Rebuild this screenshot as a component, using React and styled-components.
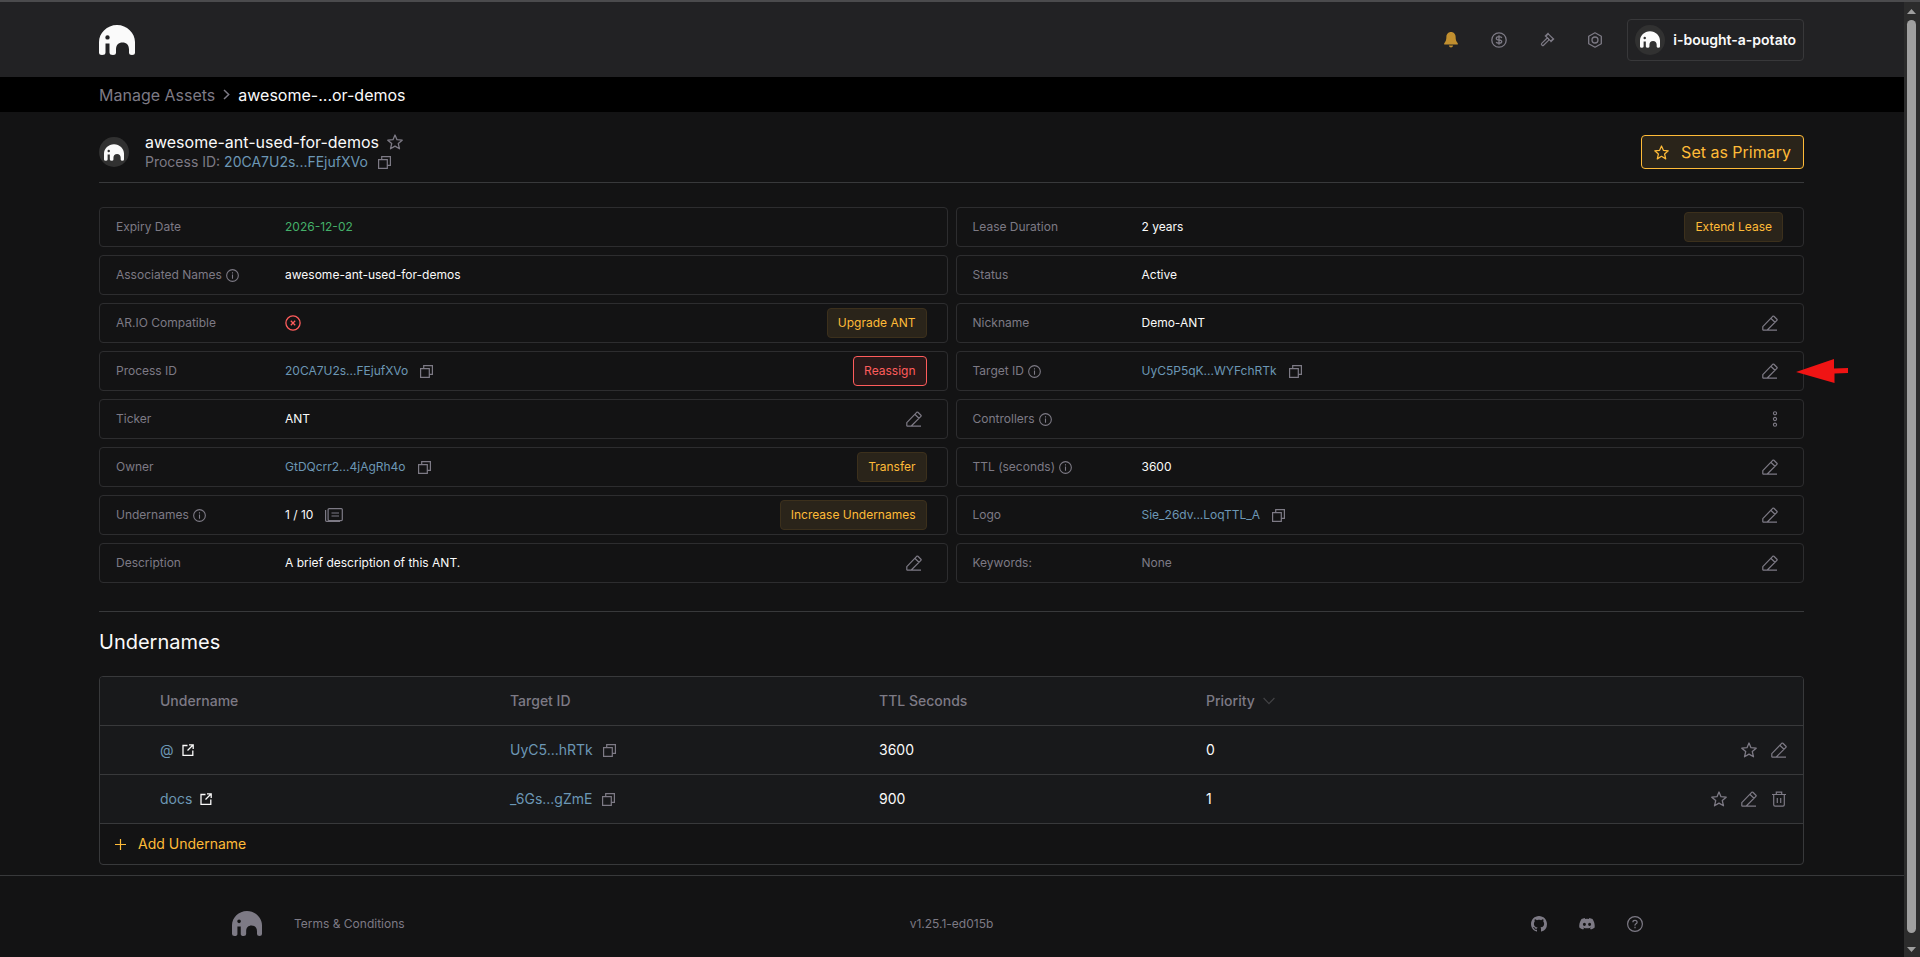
import React from "react";
import styled, { createGlobalStyle } from "styled-components";

const c = {
  page: "#131314", header: "#222224", line: "#38393b", box: "#2d2d2f",
  grey: "#7d7a85", white: "#fafafa", link: "#6c97b5", gold: "#ffbb38",
  goldBg: "#2a241a", green: "#44af69", red: "#ff5c5c",
};

const Global = createGlobalStyle`
  * { box-sizing: border-box; }
  body { margin: 0; background: ${c.page}; color: ${c.white}; font-family: Inter, Roboto, sans-serif; font-size: 12px; line-height: 16px; }
  h1, h2, dl, dd, dt { margin: 0; font-weight: 400; }
  a { text-decoration: none; color: ${c.link}; }
  button { font: inherit; color: inherit; background: none; border: 0; padding: 0; cursor: pointer; }
  svg { display: block; flex: none; }
`;

const Shell = styled.div`display: flex; min-height: 100vh;`;
const Main = styled.div`flex: 1; min-width: 0; display: flex; flex-direction: column;`;

const ScrollTrack = styled.div`
  width: 16px; height: 100vh; position: sticky; top: 0; background: #2c2c2c;
  border-top: 2px solid #4b4b4d; padding: 7px 4px 5px 3px;
  display: flex; flex-direction: column; align-items: center; gap: 6px;
`;
const ScrollThumb = styled.div`flex: 1; width: 9px; border-radius: 5px; background: #9f9f9f; margin-bottom: 8px;`;

const Header = styled.header`
  height: 77px; padding: 0 100px 0 99px; background: ${c.header}; border-top: 2px solid #4b4b4d;
  display: flex; align-items: center; justify-content: space-between;
`;
const Nav = styled.nav`display: flex; align-items: center; gap: 32px; color: ${c.grey};`;
const IconButton = styled.button`display: flex; color: ${(p) => p.$color || c.grey};`;
const NavButton = styled(IconButton)`width: 16px; justify-content: center;`;
const Profile = styled.button`
  height: 42px; margin-left: -8px; padding: 0 7px; display: flex; align-items: center; gap: 8px;
  border: 1px solid #38383a; border-radius: 4px; color: ${c.white}; font-size: 14px; font-weight: 600;
`;
const Avatar = styled.span`
  width: 30px; height: 30px; border-radius: 50%; background: #313131; color: ${c.white};
  display: flex; align-items: center; justify-content: center;
`;

const Crumbs = styled.nav`
  height: 35px; padding: 0 100px 0 99px; background: #000; display: flex; align-items: center; gap: 8px;
  font-size: 16px; color: ${c.white};
  a { color: ${c.grey}; }
`;

const Content = styled.main`padding: 20px 100px 10px 99px;`;
const TitleBar = styled.div`
  display: flex; align-items: center; justify-content: space-between;
  padding-bottom: 10px; border-bottom: 1px solid ${c.line};
`;
const Identity = styled.div`display: flex; align-items: center; gap: 16px;`;
const NameLine = styled.div`display: flex; align-items: center; gap: 8px; h1 { font-size: 16px; line-height: 20px; }`;
const ProcessLine = styled.div`
  display: flex; align-items: center; gap: 10px; font-size: 14px; line-height: 20px; color: ${c.grey};
`;
const PrimaryButton = styled.button`
  height: 34px; padding: 0 12px; display: flex; align-items: center; gap: 12px;
  border: 1px solid ${c.gold}; border-radius: 4px; background: ${c.goldBg}; color: ${c.gold}; font-size: 16px;
`;

const Fields = styled.dl`
  && { margin: 24px 0 28px; }
  display: grid; grid-template-columns: 1fr 1fr; gap: 8px;
`;
const Field = styled.div`
  position: relative; height: 40px; padding: 0 20px 0 16px; display: flex; align-items: center;
  border: 1px solid ${c.box}; border-radius: 4px;
`;
const Label = styled.dt`width: 169px; display: flex; align-items: center; gap: 4px; color: ${c.grey};`;
const Value = styled.dd`
  flex: 1; display: flex; align-items: center; gap: 12px; color: ${(p) => p.$tone || c.white};
`;
const Action = styled.button`
  height: 30px; padding: 0 10px; border-radius: 4px;
  color: ${(p) => (p.$danger ? c.red : c.gold)};
  background: ${(p) => (p.$danger ? "#291819" : c.goldBg)};
  border: 1px solid ${(p) => (p.$danger ? c.red : "#3c301c")};
`;
const FieldIcon = styled(IconButton)`padding: 0 5px;`;
const Pointer = styled.svg`position: absolute; right: -46px; top: 6px;`;

const Section = styled.section`border-top: 1px solid ${c.line}; padding-top: 18px;`;
const SectionTitle = styled.h2`&& { margin-bottom: 22px; } font-size: 20px; line-height: 24px;`;
const Panel = styled.div`border: 1px solid ${c.line}; border-radius: 4px; overflow: hidden;`;
const Table = styled.table`
  width: 100%; table-layout: fixed; border-collapse: separate; border-spacing: 0; background: #18191b; font-size: 14px;
  th, td { height: 49px; padding: 0 16px; text-align: left; border-bottom: 1px solid ${c.line}; }
  th { color: ${c.grey}; font-weight: 500; }
`;
const Col = styled.col`width: ${(p) => p.$w};`;
const Cell = styled.div`display: flex; align-items: center; gap: ${(p) => p.$gap || 8}px;`;
const RowActions = styled.div`display: flex; justify-content: flex-end; gap: 14px;`;
const AddButton = styled.button`
  height: 40px; padding: 0 15px; display: flex; align-items: center; gap: 12px; color: ${c.gold}; font-size: 14px;
`;

const Footer = styled.footer`
  flex: 1; border-top: 1px solid ${c.line}; padding: 14px 261px 0 232px; min-height: 80px;
  display: grid; grid-template-columns: 1fr auto 1fr; align-items: center; color: ${c.grey};
  a { color: ${c.grey}; }
`;
const FooterLeft = styled.div`display: flex; align-items: center; gap: 32px;`;
const FooterRight = styled.div`display: flex; align-items: center; justify-content: flex-end; gap: 32px;`;
const Version = styled.span`margin-left: 28px;`;

const Logo = ({ w = 36 }) => (
  <svg width={w} height={Math.round((w * 30) / 36)} viewBox="0 0 36 30" aria-hidden="true">
    <path fill="currentColor" fillRule="evenodd" d="M18 0C28 0 36 8 36 17V27.500Q36 30 33 30Q30 30 30 27.500V24.500C30 20 27.500 17.500 23.500 17.500S17 20 17 24.500V27.500Q17 30 14 30Q10.500 30 10.500 27.500V18.500H6.500V27.500Q6.500 30 3 30Q0 30 0 27.500V17C0 8 8 0 18 0ZM8.500 10.200a2.200 2.200 0 1 0 0 4.400a2.200 2.200 0 1 0 0-4.400Z" />
  </svg>
);
const Svg = ({ s = 16, v = 16, children, sw = 1.2 }) => (
  <svg width={s} height={s} viewBox={`0 0 ${v} ${v}`} fill="none" stroke="currentColor" strokeWidth={sw} aria-hidden="true">{children}</svg>
);
const Star = ({ s = 16 }) => <Svg s={s} sw={1.3}><path strokeLinejoin="round" d="M8 1l2 4.700 5.200.500-3.900 3.400 1.200 5.200L8 12.100l-4.500 2.700 1.200-5.200L.8 6.200 6 5.700z" /></Svg>;
const Copy = () => <Svg s={13} v={13}><path d="M.6 3.700h8.700v8.700H.6zM3.700 3.700V.6h8.700v8.700H9.300" /></Svg>;
const Edit = ({ s = 16 }) => <Svg s={s} sw={1.2}><path strokeLinejoin="round" d="M.8 15.200V11.600L10.700 1.300Q11.300.8 11.900 1.300L14.900 4.200Q15.500 4.800 14.900 5.400L5 15.200M8.800 3.300l4.200 4M.8 15.200H15" /></Svg>;
const Info = () => <Svg s={13} v={12} sw={1}><circle cx="6" cy="6" r="5.400" /><path d="M6 5v4M6 3v1.200" /></Svg>;
const Ext = () => <Svg s={12} v={12} sw={1.3}><path d="M5.500 1.500H1v9.800h9.800V6.500M7 .8h4.200V5M11 1L5.500 6.500" /></Svg>;
const Trash = () => <Svg s={16}><path d="M1 3.500h14M5.300 3.500V1.200h5.400v2.300M2.700 3.500v10.300q0 1.400 1.400 1.400h7.800q1.400 0 1.400-1.400V3.500M6.300 7v5M9.700 7v5" /></Svg>;
const Bell = () => <svg width="14" height="16" viewBox="0 0 14 16" fill="currentColor" aria-hidden="true"><path d="M7 0C9.800 0 11.600 2.200 11.600 4.800C11.600 8.500 12.400 9.800 13.800 11.300V12.500H.2V11.300C1.600 9.800 2.400 8.500 2.400 4.800C2.400 2.200 4.200 0 7 0ZM4.800 13.500H9.200Q8.700 15.400 7 15.400T4.800 13.500Z" /></svg>;
const Dollar = () => <Svg sw={1.3}><circle cx="8" cy="8" r="7.200" /><path d="M10.800 6Q10.500 4.700 8 4.700T5.300 6.300T8 8T10.700 9.700T8 11.300T5.200 10M8 3.300v9.400" /></Svg>;
const Gavel = () => (
  <Svg>
    <g transform="rotate(45 10.500 5.500)">
      <path strokeLinejoin="round" d="M7 3.800H14V7.200H7ZM6.500 3V8M14.500 3V8" />
      <rect x="9.200" y="7.200" width="2.600" height="9" rx="1" />
    </g>
  </Svg>
);
const Hex = () => <Svg sw={1.3}><path strokeLinejoin="round" d="M8 .8L14.300 4.300V11.700L8 15.200L1.700 11.700V4.300Z" /><circle cx="8" cy="8" r="3" /></Svg>;
const XCircle = () => <Svg sw={1.3}><circle cx="8" cy="8" r="7.100" /><path d="M5.800 5.800l4.400 4.400M10.200 5.800l-4.400 4.400" /></Svg>;
const ListIcon = () => <svg width="18" height="14" viewBox="0 0 18 14" fill="none" stroke="currentColor" strokeWidth="1.200" aria-hidden="true"><rect x="3.100" y=".6" width="14.200" height="12" rx="1" /><path d="M.6 2v10.500q0 .8 1 .8H15M6.500 5h7.500M6.500 8h7.500" /></svg>;
const Dots = () => <svg width="6" height="16" viewBox="0 0 6 16" fill="none" stroke="currentColor" strokeWidth="1.100" aria-hidden="true"><circle cx="3" cy="2.300" r="1.600" /><circle cx="3" cy="8" r="1.600" /><circle cx="3" cy="13.700" r="1.600" /></svg>;
const Github = () => <svg width="16" height="16" viewBox="0 0 16 16" fill="currentColor" aria-hidden="true"><path d="M8 0C3.580 0 0 3.580 0 8c0 3.540 2.290 6.530 5.470 7.590.4.070.55-.17.55-.38 0-.19-.01-.82-.01-1.490-2.010.37-2.530-.49-2.690-.94-.09-.23-.48-.94-.82-1.130-.28-.15-.68-.52-.01-.53.63-.01 1.080.58 1.230.82.72 1.210 1.870.87 2.330.66.07-.52.28-.87.51-1.070-1.780-.2-3.640-.89-3.640-3.950 0-.87.31-1.590.82-2.150-.08-.2-.36-1.020.08-2.120 0 0 .67-.21 2.200.82.64-.18 1.320-.27 2-.27s1.360.09 2 .27c1.530-1.040 2.200-.82 2.200-.82.44 1.100.16 1.920.08 2.120.51.56.82 1.270.82 2.150 0 3.070-1.870 3.750-3.650 3.950.29.25.54.73.54 1.480 0 1.070-.01 1.930-.01 2.200 0 .21.15.46.55.38A8.010 8.010 0 0 0 16 8c0-4.420-3.580-8-8-8z" /></svg>;
const Discord = () => <svg width="16" height="16" viewBox="0 0 16 16" fill="currentColor" aria-hidden="true"><path fillRule="evenodd" d="M13.500 3.100A12 12 0 0 0 10.300 2.100L9.800 3A11 11 0 0 0 6.200 3L5.700 2.100A12 12 0 0 0 2.500 3.100C.6 6 0 8.800.3 11.600A12 12 0 0 0 4.200 13.600L5 12.200 3.800 11.600 4.100 11.400A9 9 0 0 0 11.900 11.400L12.200 11.600 11 12.200 11.800 13.600A12 12 0 0 0 15.700 11.600C16 8.400 15.200 5.600 13.500 3.100ZM5.400 6.700a1.500 1.600 0 1 0 0 3.200a1.500 1.600 0 1 0 0-3.200ZM10.600 6.700a1.500 1.600 0 1 0 0 3.200a1.500 1.600 0 1 0 0-3.200Z" /></svg>;
const Help = () => <Svg><circle cx="8" cy="8" r="7.400" /><path d="M5.900 6.300Q5.900 4.300 8 4.300T10.100 6.200Q10.100 7.200 9 7.800T8 9.600M8 10.800v1.400" /></Svg>;
const Chevron = ({ down }) => down
  ? <svg width="12" height="8" viewBox="0 0 12 8" fill="none" stroke="#424245" strokeWidth="1.200" aria-hidden="true"><path d="M.6 1L6 6.600L11.400 1" /></svg>
  : <svg width="7" height="11" viewBox="0 0 7 11" fill="none" stroke={c.grey} strokeWidth="1.500" aria-hidden="true"><path d="M1 1L5.700 5.500L1 10" /></svg>;
const Plus = () => <Svg s={11} v={11}><path d="M5.500 0v11M0 5.500h11" /></Svg>;

const CopyButton = () => <IconButton aria-label="Copy"><Copy /></IconButton>;
const EditButton = () => <FieldIcon aria-label="Edit"><Edit /></FieldIcon>;

const fields = [
  { label: "Expiry Date", value: "2026-12-02", tone: c.green },
  { label: "Lease Duration", value: "2 years", action: "Extend Lease" },
  { label: "Associated Names", info: true, value: "awesome-ant-used-for-demos" },
  { label: "Status", value: "Active" },
  { label: "AR.IO Compatible", value: <XCircle />, tone: c.red, action: "Upgrade ANT" },
  { label: "Nickname", value: "Demo-ANT", edit: true },
  { label: "Process ID", link: "20CA7U2s...FEjufXVo", action: "Reassign", danger: true },
  { label: "Target ID", info: true, link: "UyC5P5qK...WYFchRTk", edit: true, pointer: true },
  { label: "Ticker", value: "ANT", edit: true },
  { label: "Controllers", info: true, menu: true },
  { label: "Owner", link: "GtDQcrr2...4jAgRh4o", action: "Transfer" },
  { label: "TTL (seconds)", info: true, value: "3600", edit: true },
  { label: "Undernames", info: true, value: "1 / 10", list: true, action: "Increase Undernames" },
  { label: "Logo", link: "Sie_26dv...LoqTTL_A", edit: true },
  { label: "Description", value: "A brief description of this ANT.", edit: true },
  { label: "Keywords:", value: "None", tone: c.grey, edit: true },
];

const rows = [
  { name: "@", target: "UyC5...hRTk", ttl: 3600, priority: 0 },
  { name: "docs", target: "_6Gs...gZmE", ttl: 900, priority: 1, removable: true },
];

const FieldRow = ({ f }) => (
  <Field>
    <Label>{f.label}{f.info && <Info />}</Label>
    <Value $tone={f.link ? c.link : f.tone}>
      {f.link ? <a href="#id">{f.link}</a> : f.value}
      {f.link && <CopyButton />}
      {f.list && <IconButton aria-label="View undernames"><ListIcon /></IconButton>}
    </Value>
    {f.action && <Action $danger={f.danger}>{f.action}</Action>}
    {f.edit && <EditButton />}
    {f.menu && <FieldIcon aria-label="More"><Dots /></FieldIcon>}
    {f.pointer && (
      <Pointer width="53" height="26" viewBox="0 0 53 26" aria-hidden="true">
        <path fill="#f01414" d="M0 14L38 1V10.500L52 10V15L38.500 15.500V25Z" />
      </Pointer>
    )}
  </Field>
);

export default function App() {
  return (
    <Shell>
      <Global />
      <Main>
        <Header>
          <Logo />
          <Nav>
            <NavButton aria-label="Notifications" $color="#c18f2f"><Bell /></NavButton>
            <NavButton aria-label="Prices"><Dollar /></NavButton>
            <NavButton aria-label="Auctions"><Gavel /></NavButton>
            <NavButton aria-label="Settings"><Hex /></NavButton>
            <Profile><Avatar><Logo w={20} /></Avatar>i-bought-a-potato</Profile>
          </Nav>
        </Header>
        <Crumbs><a href="#assets">Manage Assets</a><Chevron /><span>awesome-...or-demos</span></Crumbs>
        <Content>
          <TitleBar>
            <Identity>
              <Avatar><Logo w={20} /></Avatar>
              <div>
                <NameLine><h1>awesome-ant-used-for-demos</h1><IconButton aria-label="Favourite"><Star /></IconButton></NameLine>
                <ProcessLine><span>Process ID: <a href="#id">20CA7U2s...FEjufXVo</a></span><CopyButton /></ProcessLine>
              </div>
            </Identity>
            <PrimaryButton><Star s={15} />Set as Primary</PrimaryButton>
          </TitleBar>
          <Fields>{fields.map((f) => <FieldRow key={f.label} f={f} />)}</Fields>
          <Section>
            <SectionTitle>Undernames</SectionTitle>
            <Panel>
              <Table>
                <colgroup>
                  <Col $w="44px" /><Col $w="350px" /><Col $w="369px" /><Col $w="327px" /><Col $w="300px" /><Col />
                </colgroup>
                <thead>
                  <tr><th /><th>Undername</th><th>Target ID</th><th>TTL Seconds</th><th><Cell>Priority<Chevron down /></Cell></th><th /></tr>
                </thead>
                <tbody>
                  {rows.map((r) => (
                    <tr key={r.name}>
                      <td />
                      <td><Cell><a href="#name">{r.name}</a><IconButton $color={c.white} aria-label="Open"><Ext /></IconButton></Cell></td>
                      <td><Cell $gap={10}><a href="#id">{r.target}</a><CopyButton /></Cell></td>
                      <td>{r.ttl}</td>
                      <td>{r.priority}</td>
                      <td>
                        <RowActions>
                          <IconButton aria-label="Set as primary"><Star /></IconButton>
                          <IconButton aria-label="Edit"><Edit /></IconButton>
                          {r.removable && <IconButton aria-label="Delete"><Trash /></IconButton>}
                        </RowActions>
                      </td>
                    </tr>
                  ))}
                </tbody>
              </Table>
              <AddButton><Plus />Add Undername</AddButton>
            </Panel>
          </Section>
        </Content>
        <Footer>
          <FooterLeft><Logo w={30} /><a href="#terms">Terms &amp; Conditions</a></FooterLeft>
          <Version>v1.25.1-ed015b</Version>
          <FooterRight>
            <a href="#github" aria-label="GitHub"><Github /></a>
            <a href="#discord" aria-label="Discord"><Discord /></a>
            <a href="#help" aria-label="Help"><Help /></a>
          </FooterRight>
        </Footer>
      </Main>
      <ScrollTrack aria-hidden="true">
        <svg width="9" height="5" viewBox="0 0 9 5" fill="#9f9f9f"><path d="M0 5L4.500 0L9 5Z" /></svg>
        <ScrollThumb />
        <svg width="9" height="5" viewBox="0 0 9 5" fill="#9f9f9f"><path d="M0 0L4.500 5L9 0Z" /></svg>
      </ScrollTrack>
    </Shell>
  );
}
